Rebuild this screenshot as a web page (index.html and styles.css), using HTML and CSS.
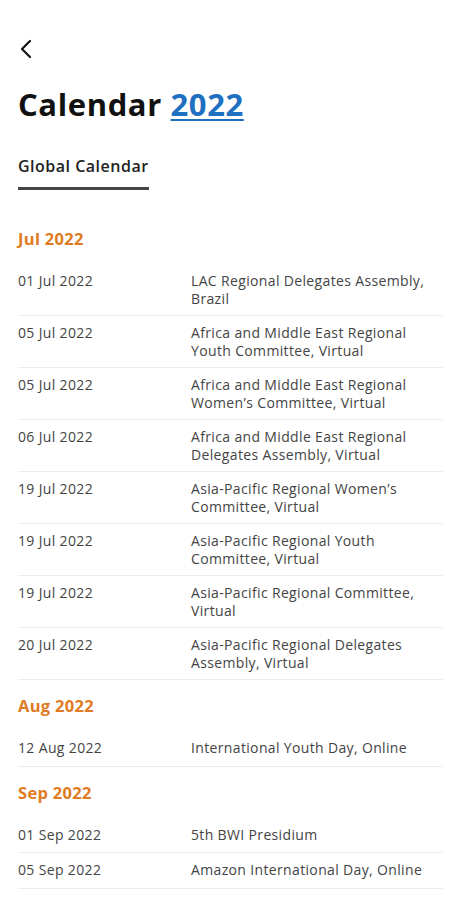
FILE: index.html
```html
<!DOCTYPE html>
<html>
<head>
<meta charset="utf-8">
<link rel="stylesheet" href="styles.css">
</head>
<body>
<div class="page">
  <div class="topbar">
    <svg class="back" width="14" height="20" viewBox="0 0 14 20"><path d="M11 2 L3 10 L11 18" fill="none" stroke="#111" stroke-width="2.2" stroke-linecap="round" stroke-linejoin="round"/></svg>
  </div>
  <h1 class="title">Calendar <a class="year" href="#">2022</a></h1>
  <div class="tabs"><div class="tab active">Global Calendar</div></div>

  <div class="month">Jul 2022</div>
  <div class="row"><div class="date">01 Jul 2022</div><div class="desc">LAC Regional Delegates Assembly, Brazil</div></div>
  <div class="row"><div class="date">05 Jul 2022</div><div class="desc">Africa and Middle East Regional Youth Committee, Virtual</div></div>
  <div class="row"><div class="date">05 Jul 2022</div><div class="desc">Africa and Middle East Regional Women’s Committee, Virtual</div></div>
  <div class="row"><div class="date">06 Jul 2022</div><div class="desc">Africa and Middle East Regional Delegates Assembly, Virtual</div></div>
  <div class="row"><div class="date">19 Jul 2022</div><div class="desc">Asia-Pacific Regional Women’s Committee, Virtual</div></div>
  <div class="row"><div class="date">19 Jul 2022</div><div class="desc">Asia-Pacific Regional Youth Committee, Virtual</div></div>
  <div class="row"><div class="date">19 Jul 2022</div><div class="desc">Asia-Pacific Regional Committee, Virtual</div></div>
  <div class="row"><div class="date">20 Jul 2022</div><div class="desc">Asia-Pacific Regional Delegates Assembly, Virtual</div></div>

  <div class="month">Aug 2022</div>
  <div class="row"><div class="date">12 Aug 2022</div><div class="desc">International Youth Day, Online</div></div>

  <div class="month">Sep 2022</div>
  <div class="row"><div class="date">01 Sep 2022</div><div class="desc">5th BWI Presidium</div></div>
  <div class="row"><div class="date">05 Sep 2022</div><div class="desc">Amazon International Day, Online</div></div>
  <div class="row"><div class="date">07 Sep 2022</div><div class="desc">International Women’s Committee, Virtual</div></div>
</div>
</body>
</html>
```

FILE: styles.css
```css
html, body {
  margin: 0;
  padding: 0;
  background: #fff;
}
body {
  font-family: "Open Sans", "Noto Sans", sans-serif;
  color: #444;
}
.page {
  padding: 0 16px 0 18px;
}
.topbar {
  height: 84px;
  padding-top: 39px;
  box-sizing: border-box;
}
.back {
  display: block;
  margin-left: 1px;
}
.title {
  margin: 0;
  font-size: 31px;
  line-height: 40px;
  font-weight: 700;
  color: #111;
  letter-spacing: 0.6px;
}
.year {
  color: #1f70c1;
  text-decoration: underline;
  text-decoration-thickness: 2px;
  text-underline-offset: 3px;
}
.tabs {
  display: flex;
  margin-top: 32px;
}
.tab {
  font-size: 16px;
  font-weight: 600;
  color: #222;
  line-height: 20px;
  letter-spacing: 0.5px;
  padding-bottom: 11px;
  border-bottom: 3px solid #444;
}
.month {
  margin-top: 39px;
  margin-bottom: 15px;
  font-size: 16.5px;
  line-height: 20px;
  font-weight: 700;
  color: #e07b22;
  letter-spacing: 0.3px;
}
.row + .month {
  margin-top: 16px;
}
.row {
  display: flex;
  padding: 8px 0;
  border-bottom: 1px solid #ececec;
  font-size: 14px;
  line-height: 17.5px;
  letter-spacing: 0.35px;
}
.date {
  width: 173px;
  flex: none;
  color: #444;
}
.desc {
  flex: 1;
  min-height: 18.5px;
  color: #444;
  padding-right: 6px;
}
```
